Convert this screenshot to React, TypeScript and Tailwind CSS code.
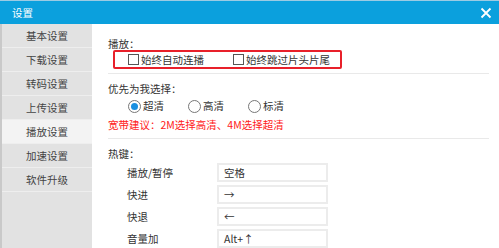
import React from 'react';

const menu = ['基本设置', '下载设置', '转码设置', '上传设置', '播放设置', '加速设置', '软件升级'];

const hotkeys = [
  { label: '播放/暂停', value: '空格' },
  { label: '快进', value: '→' },
  { label: '快退', value: '←' },
  { label: '音量加', value: 'Alt+↑' },
];

function Checkbox({ label, width }: { label: string; width: string }) {
  return (
    <label className={`flex items-center gap-[2px] whitespace-nowrap shrink-0 ${width}`}>
      <span className="w-[11px] h-[11px] border border-[#555] bg-white shrink-0" />
      <span>{label}</span>
    </label>
  );
}

function Radio({ label, checked }: { label: string; checked?: boolean }) {
  return (
    <label className="flex items-center gap-[2px] w-[60px] whitespace-nowrap">
      <span className="w-[13px] h-[13px] rounded-full border border-[#777] bg-white flex items-center justify-center shrink-0">
        {checked && <span className="w-[7px] h-[7px] rounded-full bg-[#1a8fe0]" />}
      </span>
      <span>{label}</span>
    </label>
  );
}

export default function App() {
  return (
    <div
      className="w-[499px] h-[248px] bg-white text-[10.5px] text-[#333] overflow-hidden flex flex-col"
      style={{ fontFamily: '"Noto Sans CJK SC", "Liberation Sans", sans-serif' }}
    >
      <div className="h-[24px] bg-[#0ba0dd] border-t border-[#9ccbe3] flex items-center justify-between pl-[12px] pr-[6px] text-white">
        <span className="text-[10.5px]">设置</span>
        <svg width="12" height="12" viewBox="0 0 12 12" className="mr-[1px]">
          <path d="M1.5 1.5 L10.5 10.5 M10.5 1.5 L1.5 10.5" stroke="white" strokeWidth="1.8" />
        </svg>
      </div>

      <div className="flex flex-1 min-h-0">
        <div className="w-[92px] bg-[#e2e2e2] border-l-2 border-[#c9c9c9] flex flex-col shrink-0">
          {menu.map((m) => (
            <div
              key={m}
              className={`h-[24px] flex items-center justify-center border-b border-[#eeeeee] text-[#444] ${
                m === '播放设置' ? 'bg-[#f3f3f3]' : ''
              }`}
            >
              {m}
            </div>
          ))}
        </div>

        <div className="flex-1 pl-[16px] pr-[10px] pt-[12px] flex flex-col">
          <div className="leading-[15px]">播放：</div>
          <div className="ml-[5px] mt-[-1px] w-[229px] h-[19px] border-2 border-[#e8202a] rounded-[2px] flex items-center pl-[13px]">
            <Checkbox label="始终自动连播" width="w-[105px]" />
            <Checkbox label="始终跳过片头片尾" width="w-[100px]" />
          </div>
          <div className="mt-[4px] h-[2px] bg-[#e9e9e9]" />

          <div className="mt-[7px] leading-[15px]">优先为我选择：</div>
          <div className="mt-[2px] ml-[20px] flex items-center h-[18px]">
            <Radio label="超清" checked />
            <Radio label="高清" />
            <Radio label="标清" />
          </div>
          <div className="mt-[3px] leading-[15px] text-[#ff1a1a]">宽带建议：2M选择高清、4M选择超清</div>
          <div className="mt-[6px] h-[2px] bg-[#e9e9e9]" />

          <div className="mt-[7px] leading-[15px]">热键：</div>
          <div className="mt-[2px] flex flex-col gap-[3px]">
            {hotkeys.map((h) => (
              <div key={h.label} className="flex items-center h-[19px]">
                <span className="ml-[19px] w-[90px]">{h.label}</span>
                <span className="w-[111px] h-[19px] border-2 border-[#ececec] flex items-center pl-[5px] text-[#333]">
                  {h.value}
                </span>
              </div>
            ))}
          </div>
        </div>
      </div>
    </div>
  );
}
